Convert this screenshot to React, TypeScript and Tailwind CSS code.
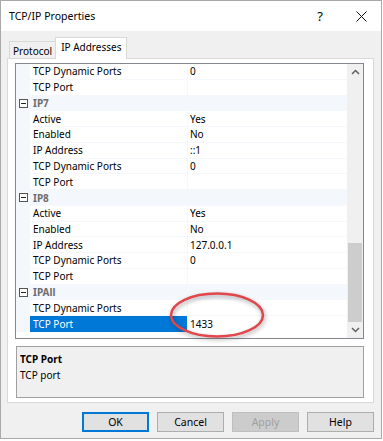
import React from "react";

type Row =
  | { cat: string }
  | { label: string; value: string; selected?: boolean };

const rows: Row[] = [
  { label: "TCP Dynamic Ports", value: "0" },
  { label: "TCP Port", value: "" },
  { cat: "IP7" },
  { label: "Active", value: "Yes" },
  { label: "Enabled", value: "No" },
  { label: "IP Address", value: "::1" },
  { label: "TCP Dynamic Ports", value: "0" },
  { label: "TCP Port", value: "" },
  { cat: "IP8" },
  { label: "Active", value: "Yes" },
  { label: "Enabled", value: "No" },
  { label: "IP Address", value: "127.0.0.1" },
  { label: "TCP Dynamic Ports", value: "0" },
  { label: "TCP Port", value: "" },
  { cat: "IPAll" },
  { label: "TCP Dynamic Ports", value: "" },
  { label: "TCP Port", value: "1433", selected: true },
];

function MinusBox() {
  return (
    <div className="w-[9px] h-[9px] border border-[#555] bg-white flex items-center justify-center">
      <div className="w-[5px] h-px bg-[#222]" />
    </div>
  );
}

function GridRow({ row }: { row: Row }) {
  if ("cat" in row) {
    return (
      <div className="flex h-[15.75px] bg-[#f4f7fc]">
        <div className="w-[14px] flex items-center justify-center pl-[1px]">
          <MinusBox />
        </div>
        <div className="flex-1 flex items-center pl-[3px] font-bold text-[#6d6d6d]">{row.cat}</div>
      </div>
    );
  }
  return (
    <div className="flex h-[15.75px]">
      <div className="w-[14px] bg-[#f4f7fc]" />
      <div
        className={
          row.selected
            ? "w-[158px] flex items-center pl-[3px] bg-[#0078d7] text-white border-r border-[#f4f7fc]"
            : "w-[158px] flex items-center pl-[3px] border-b border-r border-[#f4f7fc] text-black"
        }
      >
        {row.label}
      </div>
      <div
        className={
          row.selected
            ? "flex-1 flex items-center pl-[2px] text-black"
            : "flex-1 flex items-center pl-[2px] border-b border-[#f4f7fc] text-black"
        }
      >
        {row.value}
      </div>
    </div>
  );
}

function Chevron({ up }: { up?: boolean }) {
  return (
    <svg width="9" height="6" viewBox="0 0 9 6">
      <path
        d={up ? "M1 5 L4.5 1.5 L8 5" : "M1 1 L4.5 4.5 L8 1"}
        fill="none"
        stroke="#606060"
        strokeWidth="1.5"
      />
    </svg>
  );
}

function Btn({
  children,
  kind,
}: {
  children: React.ReactNode;
  kind?: "default" | "disabled";
}) {
  const cls =
    kind === "default"
      ? "w-[67px] h-[20px] flex items-center justify-center bg-[#e1e1e1] border border-[#0078d7] outline outline-1 outline-[#0078d7] -outline-offset-2 text-black"
      : kind === "disabled"
      ? "w-[67px] h-[20px] flex items-center justify-center bg-[#cccccc] border border-[#bfbfbf] text-[#a0a0a0]"
      : "w-[67px] h-[20px] flex items-center justify-center bg-[#e1e1e1] border border-[#adadad] text-black";
  return <div className={cls}>{children}</div>;
}

export default function App() {
  return (
    <div
      className="w-[383px] h-[441px] bg-white relative text-[10px] leading-none"
      style={{ fontFamily: '"Noto Sans", "Open Sans", sans-serif' }}
    >
      <div className="w-[382px] h-[439px] border border-[#a9a9a9] bg-[#f0f0f0] flex flex-col">
        {/* Title bar */}
        <div className="h-[30px] bg-white flex items-center pl-[8px] pr-[14px] text-[10.5px] text-black">
          <span className="flex-1">TCP/IP Properties</span>
          <span className="w-[20px] text-center mr-[26px] text-[13px]">?</span>
          <svg width="11" height="11" viewBox="0 0 11 11">
            <path d="M0.5 0.5 L10.5 10.5 M10.5 0.5 L0.5 10.5" stroke="#111" strokeWidth="1" />
          </svg>
        </div>

        {/* Tabs */}
        <div className="flex items-end pl-[8px] pt-[5px] h-[27px]">
          <div className="h-[17px] px-[3px] border border-b-0 border-[#d9d9d9] bg-[#f0f0f0] flex items-center justify-center pt-[2px] text-black">
            Protocol
          </div>
          <div className="h-[22px] px-[5px] border border-b-0 border-[#d9d9d9] bg-white flex items-center justify-center text-black -ml-[1px] relative z-10 mb-[-1px] pb-[3px]">
            IP Addresses
          </div>
        </div>

        {/* Panel */}
        <div className="mx-[6px] w-[367px] h-[345px] border border-[#d9d9d9] bg-white flex flex-col pl-[7px] pt-[4px]">
          {/* Property grid */}
          <div className="w-[349px] h-[276px] border border-[#828790] flex bg-white">
            <div className="flex-1 flex flex-col">
              {rows.map((r, i) => (
                <GridRow key={i} row={r} />
              ))}
            </div>
            <div className="w-[16px] bg-[#f0f0f0] flex flex-col">
              <div className="h-[16px] flex items-center justify-center">
                <Chevron up />
              </div>
              <div className="flex-1 flex flex-col px-[1px]">
                <div className="h-[163px]" />
                <div className="flex-1 bg-[#cdcdcd]" />
              </div>
              <div className="h-[16px] flex items-center justify-center">
                <Chevron />
              </div>
            </div>
          </div>

          {/* Description */}
          <div className="mt-[7px] ml-[1px] w-[348px] h-[52px] border border-[#a0a0a0] bg-[#f0f0f0] flex flex-col pl-[3px] pt-[4px] text-black">
            <div className="h-[16px] flex items-center font-bold">TCP Port</div>
            <div className="h-[16px] flex items-center">TCP port</div>
          </div>
        </div>

        {/* Buttons */}
        <div className="flex gap-[8px] pl-[81px] mt-[9px] text-[10.5px]">
          <Btn kind="default">OK</Btn>
          <Btn>Cancel</Btn>
          <Btn kind="disabled">Apply</Btn>
          <Btn>Help</Btn>
        </div>
      </div>

      {/* Red annotation ellipse */}
      <svg
        className="absolute left-[166px] top-[288px]"
        width="104"
        height="56"
        viewBox="0 0 104 56"
        style={{ filter: "drop-shadow(1px 2px 2px rgba(0,0,0,0.35))" }}
      >
        <ellipse cx="51" cy="27" rx="46" ry="21.5" fill="none" stroke="#e2454a" strokeWidth="2.5" />
      </svg>
    </div>
  );
}
